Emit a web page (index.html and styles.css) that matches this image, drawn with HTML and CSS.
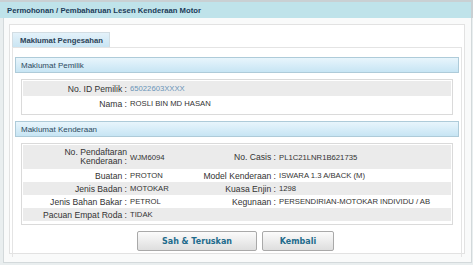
FILE: index.html
```html
<!DOCTYPE html>
<html lang="ms">
<head>
    <meta charset="UTF-8">
    <meta name="viewport" content="width=device-width, initial-scale=1.0">
    <title>Permohonan / Pembaharuan Lesen Kenderaan Motor</title>
    <link rel="stylesheet" href="styles.css">
</head>
<body>
    <div class="page">
        <div class="page-title">Permohonan / Pembaharuan Lesen Kenderaan Motor</div>

        <div class="outer">
            <div class="inner">
                <div class="tabs">
                    <div class="tab active">Maklumat Pengesahan</div>
                </div>

                <div class="tab-pane">
                    <div class="section-head">Maklumat Pemilik</div>
                    <div class="info-box">
                        <table class="info owner">
                            <tr class="alt">
                                <td class="lbl">No. ID Pemilik :</td>
                                <td class="val link">65022603XXXX</td>
                            </tr>
                            <tr>
                                <td class="lbl">Nama :</td>
                                <td class="val">ROSLI BIN MD HASAN</td>
                            </tr>
                        </table>
                    </div>

                    <div class="section-head">Maklumat Kenderaan</div>
                    <div class="info-box">
                        <table class="info vehicle">
                            <colgroup>
                                <col class="c-lbl1">
                                <col class="c-val1">
                                <col class="c-lbl2">
                                <col>
                            </colgroup>
                            <tr class="alt tall">
                                <td class="lbl">No. Pendaftaran Kenderaan :</td>
                                <td class="val">WJM6094</td>
                                <td class="lbl">No. Casis :</td>
                                <td class="val">PL1C21LNR1B621735</td>
                            </tr>
                            <tr>
                                <td class="lbl">Buatan :</td>
                                <td class="val">PROTON</td>
                                <td class="lbl">Model Kenderaan :</td>
                                <td class="val">ISWARA 1.3 A/BACK (M)</td>
                            </tr>
                            <tr class="alt">
                                <td class="lbl">Jenis Badan :</td>
                                <td class="val">MOTOKAR</td>
                                <td class="lbl">Kuasa Enjin :</td>
                                <td class="val">1298</td>
                            </tr>
                            <tr>
                                <td class="lbl">Jenis Bahan Bakar :</td>
                                <td class="val">PETROL</td>
                                <td class="lbl">Kegunaan :</td>
                                <td class="val">PERSENDIRIAN-MOTOKAR INDIVIDU / AB</td>
                            </tr>
                            <tr class="alt">
                                <td class="lbl">Pacuan Empat Roda :</td>
                                <td class="val">TIDAK</td>
                                <td class="lbl"></td>
                                <td class="val"></td>
                            </tr>
                        </table>
                    </div>

                    <div class="actions">
                        <button type="button" class="btn btn-wide">Sah &amp; Teruskan</button>
                        <button type="button" class="btn">Kembali</button>
                    </div>
                </div>
            </div>
        </div>
    </div>
</body>
</html>
```

FILE: styles.css
```css
body {
    margin: 0;
    background-color: #ffffff;
    font-family: "Liberation Sans", Arial, sans-serif;
    font-size: 8.6px;
    color: #333333;
}

.page {
    width: 473px;
    height: 265px;
    background-color: #e9eeef;
}

.page-title {
    height: 16px;
    line-height: 17px;
    padding-left: 7px;
    border-top: 2px solid #c9d0d3;
    border-right: 2px solid #c9d0d3;
    background-color: #bfe3ea;
    color: #1c3b58;
    font-size: 7.7px;
    font-weight: bold;
}

.outer {
    margin: 0 1px 0 3px;
    padding: 6px 6px 5px 5px;
    height: 233px;
    background-color: #f9fafa;
    border-left: 1px solid #d3d9db;
    border-right: 1px solid #d3d9db;
    border-bottom: 1px solid #d3d9db;
}

.inner {
    height: 221px;
    padding: 7px 2px 0 2px;
    background-color: #ffffff;
    border: 1px solid #e2e2e2;
}

.tabs {
    display: flex;
}

.tab {
    height: 14px;
    line-height: 15px;
    padding: 0 6px 0 7px;
    font-size: 7.7px;
    font-weight: bold;
    color: #2b4256;
    border: 1px solid #d2dde3;
    border-bottom: none;
    background: linear-gradient(#e4f2fa, #c9e5f3);
}

.tab-pane {
    height: 200px;
    padding: 9px 2px 0 2px;
    border: 1px solid #e4e4e4;
    border-bottom: none;
}

.section-head {
    height: 14px;
    line-height: 15px;
    padding-left: 5px;
    font-size: 8px;
    color: #2d4a60;
    border: 1px solid #aecbd9;
    background: linear-gradient(#e8f5fc, #c7e5f4);
}

.info-box {
    margin: 6px;
    padding: 1px 1px 3px 1px;
    border: 1px solid #dadada;
    background-color: #ffffff;
}

.info {
    width: 100%;
    border-collapse: collapse;
    table-layout: fixed;
}

.info td {
    padding: 0;
    white-space: nowrap;
    vertical-align: middle;
}

.info tr.alt td {
    background-color: #ebebeb;
}

.owner td {
    height: 15px;
}

.info .lbl {
    width: 104px;
    text-align: right;
    padding-right: 2px;
}

.info .val {
    padding-left: 1px;
    font-size: 7.7px;
}

.info .link {
    color: #6a94b8;
}

.vehicle td {
    height: 13px;
}

.vehicle .lbl {
    width: auto;
}

.vehicle .tall td {
    height: 24px;
}

.vehicle .tall td.lbl:first-child {
    white-space: normal;
    line-height: 9px;
}

.c-lbl1 { width: 106px; }
.c-val1 { width: 70px; }
.c-lbl2 { width: 79px; }

.actions {
    display: flex;
    justify-content: center;
    gap: 5px;
    padding-right: 3px;
}

.btn {
    height: 20px;
    width: 72px;
    padding: 0;
    font-family: "DejaVu Sans", Verdana, sans-serif;
    font-size: 8px;
    font-weight: bold;
    color: #1e6b8c;
    border: 1px solid #a9a9a9;
    border-radius: 2px;
    background: linear-gradient(#fbfbfb, #dedede);
    cursor: pointer;
}

.btn-wide {
    width: 120px;
}
```
